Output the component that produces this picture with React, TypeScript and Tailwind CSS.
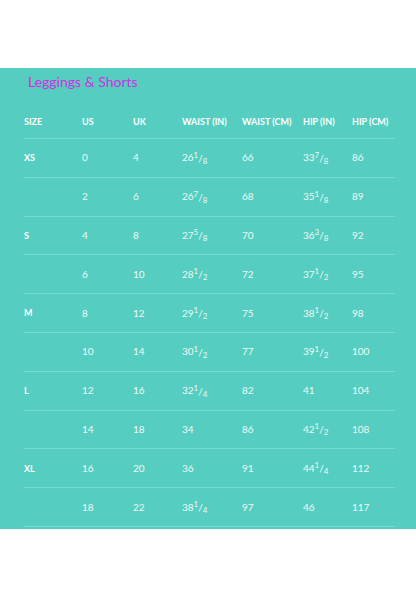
import React from 'react';

type Cell = string | [string, string, string];

const rows: { size: string; cells: Cell[] }[] = [
    { size: 'XS', cells: ['0', '4', ['26', '1', '8'], '66', ['33', '7', '8'], '86'] },
    { size: '', cells: ['2', '6', ['26', '7', '8'], '68', ['35', '1', '8'], '89'] },
    { size: 'S', cells: ['4', '8', ['27', '5', '8'], '70', ['36', '3', '8'], '92'] },
    { size: '', cells: ['6', '10', ['28', '1', '2'], '72', ['37', '1', '2'], '95'] },
    { size: 'M', cells: ['8', '12', ['29', '1', '2'], '75', ['38', '1', '2'], '98'] },
    { size: '', cells: ['10', '14', ['30', '1', '2'], '77', ['39', '1', '2'], '100'] },
    { size: 'L', cells: ['12', '16', ['32', '1', '4'], '82', '41', '104'] },
    { size: '', cells: ['14', '18', '34', '86', ['42', '1', '2'], '108'] },
    { size: 'XL', cells: ['16', '20', '36', '91', ['44', '1', '4'], '112'] },
    { size: '', cells: ['18', '22', ['38', '1', '4'], '97', '46', '117'] },
];

const headers = ['SIZE', 'US', 'UK', 'WAIST (IN)', 'WAIST (CM)', 'HIP (IN)', 'HIP (CM)'];

const cols = 'grid grid-cols-[58px_51px_49px_60px_61px_49px_1fr] items-center';

function Value({ v }: { v: Cell }) {
    if (typeof v === 'string') return <span>{v}</span>;
    const [whole, num, den] = v;
    return (
        <span className="inline-flex items-center">
            {whole}
            <span className="relative -top-[3px] text-[8px] leading-none">{num}</span>
            <span className="text-[10px] leading-none">/</span>
            <span className="relative top-[3px] text-[8px] leading-none">{den}</span>
        </span>
    );
}

export default function App() {
    return (
        <div className="min-h-[598px] bg-white font-['Lato','Liberation_Sans',sans-serif]">
            <div className="h-[68px]" />

            {/* Size chart panel */}
            <section className="bg-[#55cdc0] pt-1 pb-[2px]">
                <h1 className="pl-[28px] text-[14px] leading-5 text-[#d42ee0]">Leggings &amp; Shorts</h1>

                <div className="ml-6 mr-[21px] mt-[13px]">
                    {/* Header row */}
                    <div className={`${cols} h-[34px] border-b border-[#76d9ce] text-[9px] font-bold text-white`}>
                        {headers.map((h) => (
                            <span key={h}>{h}</span>
                        ))}
                    </div>

                    {rows.map((r, i) => (
                        <div
                            key={i}
                            className={`${cols} h-[38.8px] border-b border-[#76d9ce] text-[10px] text-[#eefaf8]`}
                        >
                            <span className="text-[9px] font-bold text-white">{r.size}</span>
                            {r.cells.map((c, j) => (
                                <Value key={j} v={c} />
                            ))}
                        </div>
                    ))}
                </div>
            </section>
        </div>
    );
}
